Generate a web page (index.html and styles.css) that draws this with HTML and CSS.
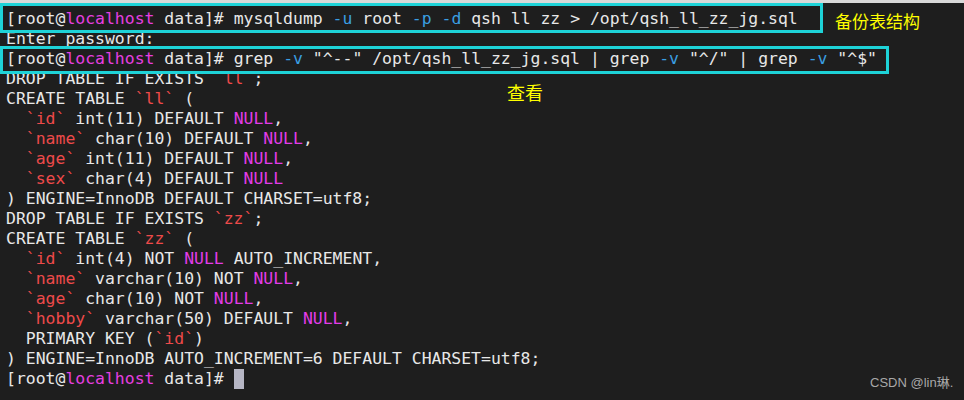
FILE: index.html
```html
<!DOCTYPE html>
<html>
<head>
<meta charset="utf-8">
<link rel="stylesheet" href="styles.css">
</head>
<body>
<div class="screen">
  <div class="strip"></div>
  <div class="term">
    <div class="line"><span class="w">[root@</span><span class="host">localhost</span> data]# mysqldump <span class="opt">-u</span> root <span class="opt">-p</span> <span class="opt">-d</span> qsh ll zz &gt; /opt/qsh_ll_zz_jg.sql</div>
    <div class="line">Enter password:</div>
    <div class="line">[root@<span class="host">localhost</span> data]# grep <span class="opt">-v</span> "^--" /opt/qsh_ll_zz_jg.sql | grep <span class="opt">-v</span> "^/" | grep <span class="opt">-v</span> "^$"</div>
    <div class="line">DROP TABLE IF EXISTS <span class="id">`ll`</span>;</div>
    <div class="line">CREATE TABLE <span class="id">`ll`</span> (</div>
    <div class="line">  <span class="id">`id`</span> int(11) DEFAULT <span class="null">NULL</span>,</div>
    <div class="line">  <span class="id">`name`</span> char(10) DEFAULT <span class="null">NULL</span>,</div>
    <div class="line">  <span class="id">`age`</span> int(11) DEFAULT <span class="null">NULL</span>,</div>
    <div class="line">  <span class="id">`sex`</span> char(4) DEFAULT <span class="null">NULL</span></div>
    <div class="line">) ENGINE=InnoDB DEFAULT CHARSET=utf8;</div>
    <div class="line">DROP TABLE IF EXISTS <span class="id">`zz`</span>;</div>
    <div class="line">CREATE TABLE <span class="id">`zz`</span> (</div>
    <div class="line">  <span class="id">`id`</span> int(4) NOT <span class="null">NULL</span> AUTO_INCREMENT,</div>
    <div class="line">  <span class="id">`name`</span> varchar(10) NOT <span class="null">NULL</span>,</div>
    <div class="line">  <span class="id">`age`</span> char(10) NOT <span class="null">NULL</span>,</div>
    <div class="line">  <span class="id">`hobby`</span> varchar(50) DEFAULT <span class="null">NULL</span>,</div>
    <div class="line">  PRIMARY KEY (<span class="id">`id`</span>)</div>
    <div class="line">) ENGINE=InnoDB AUTO_INCREMENT=6 DEFAULT CHARSET=utf8;</div>
    <div class="line">[root@<span class="host">localhost</span> data]# <span class="cursor"></span></div>
  </div>
  <div class="box box1"></div>
  <div class="box box2"></div>
  <div class="note note1">备份表结构</div>
  <div class="note note2">查看</div>
  <div class="mark">CSDN @lin琳.</div>
</div>
</body>
</html>
```

FILE: styles.css
```css
html, body {
  margin: 0;
  padding: 0;
  background: #1e1e1e;
}
.screen {
  position: relative;
  width: 964px;
  height: 400px;
  overflow: hidden;
  background: #1e1e1e;
}
.strip {
  height: 3px;
  background: #d9d9d9;
}
.term {
  padding: 6px 0 0 6px;
  font-family: "DejaVu Sans Mono", monospace;
  font-size: 16.45px;
  line-height: 20px;
  color: #e8e8e8;
}
.line {
  white-space: pre;
  height: 20px;
}
.host { color: #e63fe0; }
.opt { color: #3a9fe2; }
.id { color: #ee4a4a; }
.null { color: #e23ce8; }
.cursor {
  display: inline-block;
  width: 10px;
  height: 20px;
  background: #b6b6c4;
  vertical-align: top;
}
.box {
  position: absolute;
  border: 3px solid #1ed3d8;
  box-sizing: border-box;
}
.box1 {
  left: 0;
  top: 3px;
  width: 823px;
  height: 30px;
}
.box2 {
  left: 0;
  top: 46px;
  width: 889px;
  height: 28px;
}
.note {
  position: absolute;
  font-family: "Noto Sans CJK SC", sans-serif;
  color: #ffff00;
  line-height: 1;
}
.note1 {
  left: 835px;
  top: 12px;
  font-size: 17px;
}
.note2 {
  left: 507px;
  top: 83px;
  font-size: 18px;
}
.mark {
  position: absolute;
  left: 870px;
  top: 375px;
  font-family: "Liberation Sans", "Noto Sans CJK SC", sans-serif;
  font-size: 13px;
  line-height: 16px;
  color: #a8a8a8;
}
```
